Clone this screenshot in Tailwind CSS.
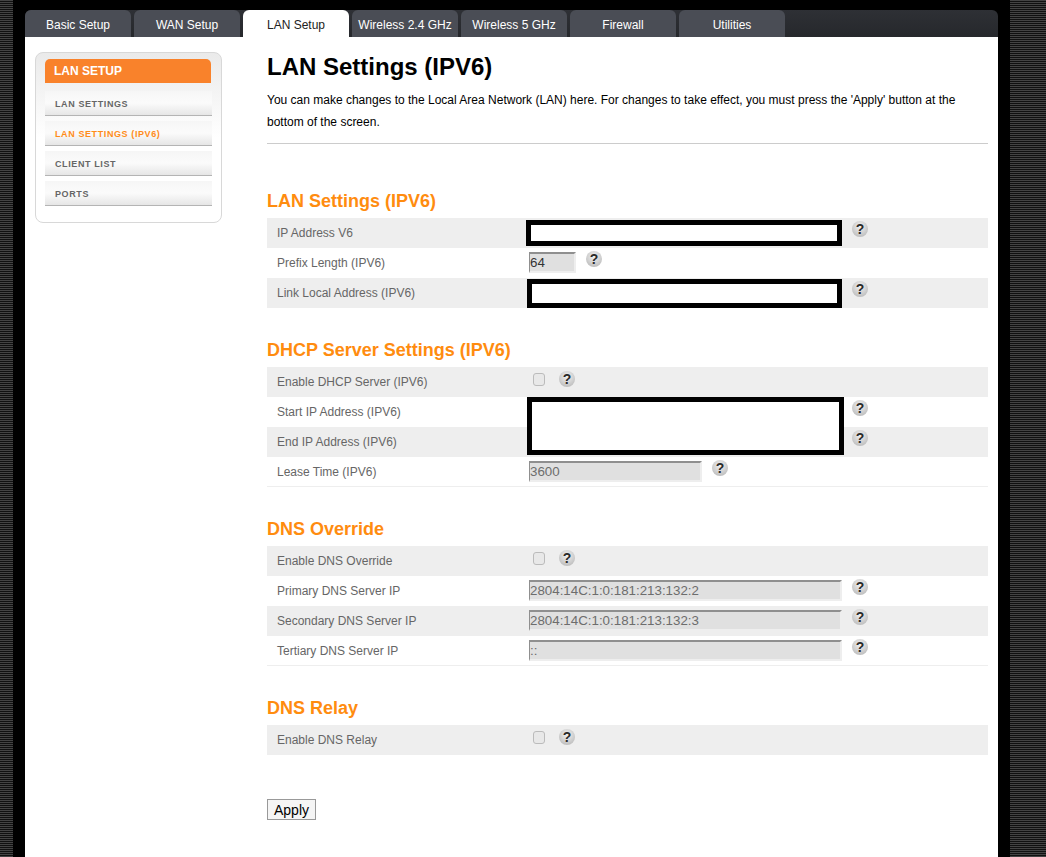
<!DOCTYPE html>
<html lang="en">
<head>
    <meta charset="UTF-8">
    <meta name="viewport" content="width=device-width, initial-scale=1.0">
    <title>LAN Settings (IPV6)</title>
    <script src="https://cdn.jsdelivr.net/npm/@tailwindcss/browser@4"></script>
</head>
<body class="bg-black font-['Liberation_Sans',Arial,sans-serif] text-xs overflow-hidden">
<div class="flex h-[857px] w-[1046px] overflow-hidden">
    <div class="w-[13px] shrink-0 bg-[repeating-linear-gradient(to_bottom,#444_0,#444_1px,#111_1px,#111_2px)]"></div>
    <div class="w-[973px] shrink-0 ml-[12px] pt-[10px] flex flex-col">
        <!-- tabs -->
        <div class="h-[27px] flex gap-[3px] rounded-t-[6px] bg-gradient-to-b from-[#2e3035] to-[#26282c]">
            <a class="w-[106px] rounded-t-[6px] bg-[#4a4d55] text-white flex items-center justify-center pt-[2px]">Basic Setup</a>
            <a class="w-[106px] rounded-t-[6px] bg-[#4a4d55] text-white flex items-center justify-center pt-[2px]">WAN Setup</a>
            <a class="w-[106px] rounded-t-[6px] bg-white text-[#222] flex items-center justify-center pt-[2px]">LAN Setup</a>
            <a class="w-[106px] rounded-t-[6px] bg-[#4a4d55] text-white flex items-center justify-center pt-[2px]">Wireless 2.4 GHz</a>
            <a class="w-[106px] rounded-t-[6px] bg-[#4a4d55] text-white flex items-center justify-center pt-[2px]">Wireless 5 GHz</a>
            <a class="w-[106px] rounded-t-[6px] bg-[#4a4d55] text-white flex items-center justify-center pt-[2px]">Firewall</a>
            <a class="w-[106px] rounded-t-[6px] bg-[#4a4d55] text-white flex items-center justify-center pt-[2px]">Utilities</a>
        </div>
        <div class="flex-1 bg-white flex items-start">
            <!-- sidebar -->
            <div class="ml-[10px] mt-[15px] w-[187px] h-[171px] shrink-0 border border-[#d8d8d8] rounded-[8px] bg-gradient-to-b from-[#eaeaea] via-white to-white px-[9px] pt-[6px]">
                <div class="h-[24px] w-[166px] rounded-t-[5px] bg-[#f9822b] text-white font-bold pl-[9px] leading-[24px]">LAN SETUP</div>
                <div class="mt-[8px] flex flex-col gap-[5px] w-[167px]">
                    <a class="h-[25px] border-b border-[#b4b4b4] bg-gradient-to-b from-[#f6f6f6] via-[#fbfbfb] to-[#e6e6e6] pl-[10px] text-[9px] font-bold tracking-[0.6px] text-[#666] leading-[26px]">LAN SETTINGS</a>
                    <a class="h-[25px] border-b border-[#b4b4b4] bg-gradient-to-b from-[#f6f6f6] via-[#fbfbfb] to-[#e6e6e6] pl-[10px] text-[9px] font-bold tracking-[0.6px] text-[#ff8c1a] leading-[26px]">LAN SETTINGS (IPV6)</a>
                    <a class="h-[25px] border-b border-[#b4b4b4] bg-gradient-to-b from-[#f6f6f6] via-[#fbfbfb] to-[#e6e6e6] pl-[10px] text-[9px] font-bold tracking-[0.6px] text-[#666] leading-[26px]">CLIENT LIST</a>
                    <a class="h-[25px] border-b border-[#b4b4b4] bg-gradient-to-b from-[#f6f6f6] via-[#fbfbfb] to-[#e6e6e6] pl-[10px] text-[9px] font-bold tracking-[0.6px] text-[#666] leading-[26px]">PORTS</a>
                </div>
            </div>
            <!-- content -->
            <div class="ml-[45px] w-[721px] shrink-0">
                <h1 class="mt-[16px] text-[24px] leading-[28px] font-bold text-black">LAN Settings (IPV6)</h1>
                <p class="mt-[8px] leading-[22px] text-black">You can make changes to the Local Area Network (LAN) here. For changes to take effect, you must press the 'Apply' button at the bottom of the screen.</p>
                <hr class="mt-[10px] border-t border-[#ccc]">

                <h2 class="mt-[47px] text-[18px] leading-[21px] font-bold text-[#ff8c0f]">LAN Settings (IPV6)</h2>
                <div class="mt-[6px]">
                    <div class="h-[30px] flex bg-[#eee]">
                        <label class="w-[260px] pl-[10px] pt-[7px] text-[#666]">IP Address V6</label>
                        <div class="relative">
                            <div class="absolute left-[-1px] top-[2px] w-[316px] h-[26px] border-[5px] border-black bg-white"></div>
                            <span class="absolute left-[325px] top-[3px] w-4 h-4 rounded-full bg-[radial-gradient(circle_at_50%_35%,#f2f2f2,#b0b0b0)] text-[#2a2a2a] text-[14px] font-bold leading-4 text-center">?</span>
                        </div>
                    </div>
                    <div class="h-[30px] flex">
                        <label class="w-[260px] pl-[10px] pt-[7px] text-[#666]">Prefix Length (IPV6)</label>
                        <input disabled value="64" class="ml-[2px] mt-[4px] w-[47px] h-[21px] border-2 border-l border-t-[#8f8f8f] border-l-[#8f8f8f] border-r-[#eee] border-b-[#eee] bg-[#e0e0e0] text-[13.33px] text-[#333] px-0">
                        <span class="ml-[10px] mt-[3px] w-4 h-4 rounded-full bg-[radial-gradient(circle_at_50%_35%,#f2f2f2,#b0b0b0)] text-[#2a2a2a] text-[14px] font-bold leading-4 text-center">?</span>
                    </div>
                    <div class="h-[30px] flex bg-[#eee]">
                        <label class="w-[260px] pl-[10px] pt-[7px] text-[#666]">Link Local Address (IPV6)</label>
                        <div class="relative">
                            <div class="absolute left-0 top-[1px] w-[315px] h-[29px] border-[5px] border-black bg-white"></div>
                            <span class="absolute left-[325px] top-[3px] w-4 h-4 rounded-full bg-[radial-gradient(circle_at_50%_35%,#f2f2f2,#b0b0b0)] text-[#2a2a2a] text-[14px] font-bold leading-4 text-center">?</span>
                        </div>
                    </div>
                </div>

                <h2 class="mt-[32px] text-[18px] leading-[21px] font-bold text-[#ff8c0f]">DHCP Server Settings (IPV6)</h2>
                <div class="mt-[6px]">
                    <div class="h-[30px] flex bg-[#eee]">
                        <label class="w-[260px] pl-[10px] pt-[7px] text-[#666]">Enable DHCP Server (IPV6)</label>
                        <input type="checkbox" disabled class="appearance-none ml-[6px] mt-[6px] w-[12px] h-[13px] border border-[#bbb] rounded-[3px] bg-[#e8e8e8]">
                        <span class="ml-[14px] mt-[4px] w-4 h-4 rounded-full bg-[radial-gradient(circle_at_50%_35%,#f2f2f2,#b0b0b0)] text-[#2a2a2a] text-[14px] font-bold leading-4 text-center">?</span>
                    </div>
                    <div class="relative">
                        <div class="h-[30px] flex">
                            <label class="w-[260px] pl-[10px] pt-[7px] text-[#666]">Start IP Address (IPV6)</label>
                            <div class="ml-[325px] mt-[3px] w-4 h-4 rounded-full bg-[radial-gradient(circle_at_50%_35%,#f2f2f2,#b0b0b0)] text-[#2a2a2a] text-[14px] font-bold leading-4 text-center">?</div>
                        </div>
                        <div class="h-[30px] flex bg-[#eee]">
                            <label class="w-[260px] pl-[10px] pt-[7px] text-[#666]">End IP Address (IPV6)</label>
                            <div class="ml-[325px] mt-[3px] w-4 h-4 rounded-full bg-[radial-gradient(circle_at_50%_35%,#f2f2f2,#b0b0b0)] text-[#2a2a2a] text-[14px] font-bold leading-4 text-center">?</div>
                        </div>
                        <!-- redacted block spans both rows -->
                        <div class="absolute left-[260px] top-0 w-[317px] h-[58px] border-[5px] border-black bg-white"></div>
                    </div>
                    <div class="h-[30px] flex border-b border-[#eee]">
                        <label class="w-[260px] pl-[10px] pt-[7px] text-[#666]">Lease Time (IPV6)</label>
                        <input disabled value="3600" class="ml-[2px] mt-[4px] w-[173px] h-[21px] border-2 border-l border-t-[#8f8f8f] border-l-[#8f8f8f] border-r-[#eee] border-b-[#eee] bg-[#e0e0e0] text-[13.33px] text-[#6d6d6d] px-0">
                        <span class="ml-[10px] mt-[3px] w-4 h-4 rounded-full bg-[radial-gradient(circle_at_50%_35%,#f2f2f2,#b0b0b0)] text-[#2a2a2a] text-[14px] font-bold leading-4 text-center">?</span>
                    </div>
                </div>

                <h2 class="mt-[32px] text-[18px] leading-[21px] font-bold text-[#ff8c0f]">DNS Override</h2>
                <div class="mt-[6px]">
                    <div class="h-[30px] flex bg-[#eee]">
                        <label class="w-[260px] pl-[10px] pt-[7px] text-[#666]">Enable DNS Override</label>
                        <input type="checkbox" disabled class="appearance-none ml-[6px] mt-[6px] w-[12px] h-[13px] border border-[#bbb] rounded-[3px] bg-[#e8e8e8]">
                        <span class="ml-[14px] mt-[4px] w-4 h-4 rounded-full bg-[radial-gradient(circle_at_50%_35%,#f2f2f2,#b0b0b0)] text-[#2a2a2a] text-[14px] font-bold leading-4 text-center">?</span>
                    </div>
                    <div class="h-[30px] flex">
                        <label class="w-[260px] pl-[10px] pt-[7px] text-[#666]">Primary DNS Server IP</label>
                        <input disabled value="2804:14C:1:0:181:213:132:2" class="ml-[2px] mt-[4px] w-[313px] h-[21px] border-2 border-l border-t-[#8f8f8f] border-l-[#8f8f8f] border-r-[#eee] border-b-[#eee] bg-[#e0e0e0] text-[13.33px] text-[#6d6d6d] px-0">
                        <span class="ml-[10px] mt-[3px] w-4 h-4 rounded-full bg-[radial-gradient(circle_at_50%_35%,#f2f2f2,#b0b0b0)] text-[#2a2a2a] text-[14px] font-bold leading-4 text-center">?</span>
                    </div>
                    <div class="h-[30px] flex bg-[#eee]">
                        <label class="w-[260px] pl-[10px] pt-[7px] text-[#666]">Secondary DNS Server IP</label>
                        <input disabled value="2804:14C:1:0:181:213:132:3" class="ml-[2px] mt-[4px] w-[313px] h-[21px] border-2 border-l border-t-[#8f8f8f] border-l-[#8f8f8f] border-r-[#eee] border-b-[#eee] bg-[#e0e0e0] text-[13.33px] text-[#6d6d6d] px-0">
                        <span class="ml-[10px] mt-[3px] w-4 h-4 rounded-full bg-[radial-gradient(circle_at_50%_35%,#f2f2f2,#b0b0b0)] text-[#2a2a2a] text-[14px] font-bold leading-4 text-center">?</span>
                    </div>
                    <div class="h-[30px] flex border-b border-[#eee]">
                        <label class="w-[260px] pl-[10px] pt-[7px] text-[#666]">Tertiary DNS Server IP</label>
                        <input disabled value="::" class="ml-[2px] mt-[4px] w-[313px] h-[21px] border-2 border-l border-t-[#8f8f8f] border-l-[#8f8f8f] border-r-[#eee] border-b-[#eee] bg-[#e0e0e0] text-[13.33px] text-[#6d6d6d] px-0">
                        <span class="ml-[10px] mt-[3px] w-4 h-4 rounded-full bg-[radial-gradient(circle_at_50%_35%,#f2f2f2,#b0b0b0)] text-[#2a2a2a] text-[14px] font-bold leading-4 text-center">?</span>
                    </div>
                </div>

                <h2 class="mt-[32px] text-[18px] leading-[21px] font-bold text-[#ff8c0f]">DNS Relay</h2>
                <div class="mt-[6px]">
                    <div class="h-[30px] flex bg-[#eee]">
                        <label class="w-[260px] pl-[10px] pt-[7px] text-[#666]">Enable DNS Relay</label>
                        <input type="checkbox" disabled class="appearance-none ml-[6px] mt-[6px] w-[12px] h-[13px] border border-[#bbb] rounded-[3px] bg-[#e8e8e8]">
                        <span class="ml-[14px] mt-[4px] w-4 h-4 rounded-full bg-[radial-gradient(circle_at_50%_35%,#f2f2f2,#b0b0b0)] text-[#2a2a2a] text-[14px] font-bold leading-4 text-center">?</span>
                    </div>
                </div>

                <button class="mt-[44px] w-[49px] h-[21px] border border-[#999] bg-[#f5f5f5] text-[14px] leading-[18px] text-black">Apply</button>
            </div>
        </div>
    </div>
    <div class="w-[36px] shrink-0 ml-[12px] bg-[repeating-linear-gradient(to_bottom,#444_0,#444_1px,#111_1px,#111_2px)]"></div>
</div>
</body>
</html>
